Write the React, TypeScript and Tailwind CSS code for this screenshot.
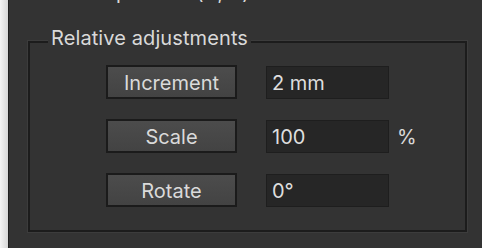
import React from 'react';

const rows = [
  { label: 'Increment', value: '2 mm', unit: '' },
  { label: 'Scale', value: '100', unit: '%' },
  { label: 'Rotate', value: '0°', unit: '' },
];

export default function App() {
  return (
    <div
      className="flex w-[482px] h-[248px] overflow-hidden bg-[#333333] text-[#d9d9d9]"
      style={{ fontFamily: 'Inter, "Noto Sans", sans-serif' }}
    >
      {/* window edge */}
      <div className="w-[8px] shrink-0 bg-gradient-to-r from-[#f4f4f4] to-[#d6d6d6]" />
      <div className="w-px shrink-0 bg-[#1f1f1f]" />

      <div className="flex-1 flex flex-col">
        {/* previous line, scrolled mostly out of view */}
        <div className="h-[3px] overflow-hidden">
          <div className="-mt-[17px] pl-[18px] text-[20px] leading-[20px] whitespace-nowrap">
            Absolute position (X, Y) mm
          </div>
        </div>

        {/* group box */}
        <div className="relative mt-[38px] ml-[19px] w-[439px] h-[191px] border-2 border-[#1c1c1c] shadow-[0_0_0_1px_#3c3c3c]">
          <span className="absolute -top-[15px] left-[18px] px-[3px] bg-[#333333] text-[20px] leading-[20px] tracking-[0.1px] whitespace-nowrap">
            Relative adjustments
          </span>

          <div className="flex flex-col gap-[20px] pt-[22px] pl-[76px]">
            {rows.map((r) => (
              <div key={r.label} className="flex items-center h-[34px]">
                <button className="w-[131px] h-[34px] pt-[2px] border-2 border-[#1b1b1b] bg-gradient-to-b from-[#4c4c4c] to-[#434343] text-[20px] leading-none text-[#dadada]">
                  {r.label}
                </button>
                <div className="ml-[29px] w-[123px] h-[33px] flex items-center pl-[5px] pt-[2px] border border-[#1e1e1e] bg-[#262626] text-[20px] leading-none text-[#dedede]">
                  {r.value}
                </div>
                {r.unit && <span className="ml-[8px] pt-[2px] text-[20px] leading-none">{r.unit}</span>}
              </div>
            ))}
          </div>
        </div>
      </div>
    </div>
  );
}
